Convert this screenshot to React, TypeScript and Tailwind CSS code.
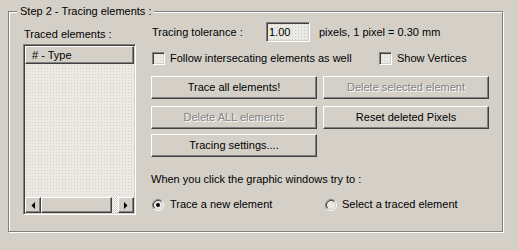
import React from 'react';

// classic 3D bevels
const raised =
  'border border-t-white border-l-white border-r-[#404040] border-b-[#404040] shadow-[inset_-1px_-1px_0_#808080,inset_1px_1px_0_#d4d0c8]';
const sunken =
  'border border-t-[#808080] border-l-[#808080] border-r-white border-b-white shadow-[inset_1px_1px_0_#404040,inset_-1px_-1px_0_#d4d0c8]';
const dotted =
  'bg-[#ebe9e4] bg-[radial-gradient(circle,#d3d0c9_0.6px,transparent_0.9px)] bg-[length:3px_3px]';

function Button({ label, disabled }: { label: string; disabled?: boolean }) {
  return (
    <div
      className={`flex h-[23px] w-[166px] items-center justify-center ${raised} ${
        disabled ? 'text-[#808080] [text-shadow:1px_1px_0_#fff]' : 'text-black'
      }`}
    >
      {label}
    </div>
  );
}

function Checkbox() {
  return <div className={`h-[13px] w-[13px] shrink-0 ${sunken} ${dotted}`} />;
}

function Radio({ checked }: { checked?: boolean }) {
  return (
    <svg width="12" height="12" viewBox="0 0 12 12" className="shrink-0">
      <circle cx="6" cy="6" r="4" fill="#ebe9e4" />
      <path d="M2.11 9.89 A5.5 5.5 0 0 1 9.89 2.11" stroke="#808080" fill="none" />
      <path d="M9.89 2.11 A5.5 5.5 0 0 1 2.11 9.89" stroke="#ffffff" fill="none" />
      <path d="M2.82 9.18 A4.5 4.5 0 0 1 9.18 2.82" stroke="#404040" fill="none" />
      <path d="M9.18 2.82 A4.5 4.5 0 0 1 2.82 9.18" stroke="#d4d0c8" fill="none" />
      {checked && <circle cx="6" cy="6" r="2" fill="#000" />}
    </svg>
  );
}

function Arrow({ dir }: { dir: 'left' | 'right' }) {
  return (
    <div className={`flex h-[16px] w-[16px] shrink-0 items-center justify-center ${raised}`}>
      <svg width="4" height="7" viewBox="0 0 4 7">
        {dir === 'left' ? (
          <polygon points="4,0 4,7 0.5,3.5" fill="#000" />
        ) : (
          <polygon points="0,0 0,7 3.5,3.5" fill="#000" />
        )}
      </svg>
    </div>
  );
}

export default function App() {
  return (
    <div className="h-[250px] w-[518px] bg-[#d4d0c8] pl-2 pt-[11px] font-['Liberation_Sans',Arial,sans-serif] text-[11px] leading-[13px] text-black">
      <div className="relative h-[221px] w-[495px] border border-[#808080] shadow-[inset_1px_1px_0_#fff,1px_1px_0_#fff]">
        {/* legend */}
        <div className="absolute -top-[7px] left-[8px] bg-[#d4d0c8] px-[3px]">
          Step 2 - Tracing elements :
        </div>

        <div className="flex pl-[14px] pt-[10px]">
          {/* left column: traced elements list */}
          <div className="mt-[6px] w-[113px] shrink-0">
            <div className="pl-px">Traced elements :</div>
            <div className={`mt-[3px] flex h-[171px] flex-col ${sunken} p-px`}>
              <div className={`flex h-[18px] items-center pl-[6px] ${raised} bg-[#d4d0c8]`}>
                # - Type
              </div>
              <div className={`flex-1 ${dotted}`} />
              <div className="flex h-[16px]">
                <Arrow dir="left" />
                <div className={`h-[16px] w-[71px] ${raised} bg-[#d4d0c8]`} />
                <div className="flex-1 bg-[repeating-conic-gradient(#ffffff_0_25%,#d4d0c8_0_50%)] bg-[length:2px_2px]" />
                <Arrow dir="right" />
              </div>
            </div>
          </div>

          {/* right column: options */}
          <div className="ml-[15px] flex flex-col">
            <div className="flex h-[20px] items-center">
              <div className="w-[115px] pl-px">Tracing tolerance :</div>
              <div className={`flex h-[20px] w-[44px] items-center pl-[2px] ${sunken} ${dotted}`}>
                1.00
              </div>
              <div className="ml-[9px]">pixels, 1 pixel = 0.30 mm</div>
            </div>

            <div className="mt-[10px] flex h-[13px] items-center">
              <div className="flex w-[228px] items-center pl-px">
                <Checkbox />
                <span className="ml-[5px]">Follow intersecating elements as well</span>
              </div>
              <Checkbox />
              <span className="ml-[5px]">Show Vertices</span>
            </div>

            <div className="mt-[11px] flex gap-[6px]">
              <Button label="Trace all elements!" />
              <Button label="Delete selected element" disabled />
            </div>
            <div className="mt-[7px] flex gap-[6px]">
              <Button label="Delete ALL elements" disabled />
              <Button label="Reset deleted Pixels" />
            </div>
            <div className="mt-[5px] flex">
              <Button label="Tracing settings...." />
            </div>

            <div className="mt-[16px]">When you click the graphic windows try to :</div>

            <div className="mt-[12px] flex h-[13px] items-center">
              <div className="flex w-[174px] items-center pl-px">
                <Radio checked />
                <span className="ml-[6px]">Trace a new element</span>
              </div>
              <Radio />
              <span className="ml-[5px]">Select a traced element</span>
            </div>
          </div>
        </div>
      </div>
    </div>
  );
}
